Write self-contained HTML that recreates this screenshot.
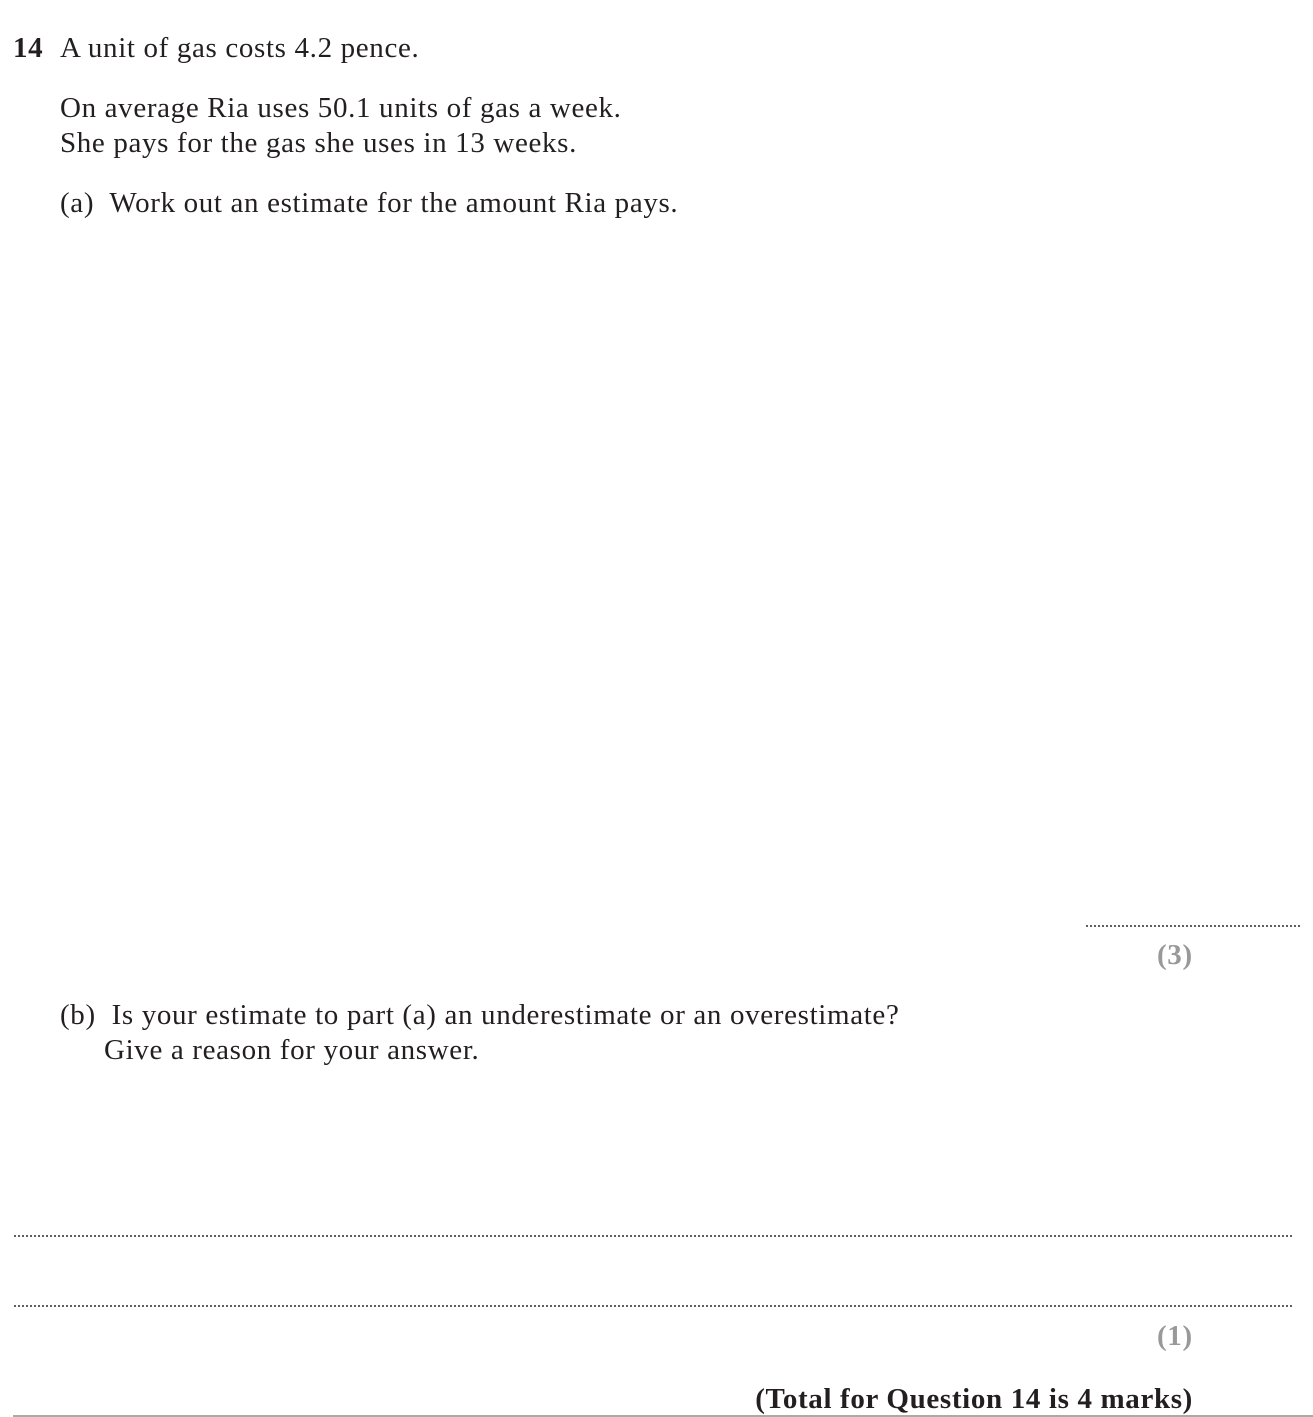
<!DOCTYPE html>
<html><head><meta charset="utf-8"><style>
body{margin:0;width:1313px;height:1417px;background:#fff;position:relative;overflow:hidden;font-family:"Liberation Serif",serif;color:#231f20}
.t{position:absolute;font-size:29px;line-height:28px;white-space:nowrap;letter-spacing:0.65px}
.d{position:absolute;height:2px;background:radial-gradient(circle,#333 0.8px,transparent 1.1px) 0 0/4px 2px repeat-x}
.g{color:#999;font-weight:bold}
</style></head><body>
<div class="t" style="left:13px;top:34px"><b>14</b></div>
<div class="t" style="left:60px;top:34px">A unit of gas costs 4.2 pence.</div>
<div class="t" style="left:60px;top:94px">On average Ria uses 50.1 units of gas a week.</div>
<div class="t" style="left:60px;top:129px">She pays for the gas she uses in 13 weeks.</div>
<div class="t" style="left:60px;top:189px">(a)&nbsp; Work out an estimate for the amount Ria pays.</div>
<div class="d" style="left:1085px;width:216px;top:925px"></div>
<div class="t g" style="left:1157px;top:941px">(3)</div>
<div class="t" style="left:60px;top:1001px">(b)&nbsp; Is your estimate to part (a) an underestimate or an overestimate?</div>
<div class="t" style="left:104px;top:1036px">Give a reason for your answer.</div>
<div class="d" style="left:13px;width:1281px;top:1235px"></div>
<div class="d" style="left:13px;width:1281px;top:1305px"></div>
<div class="t g" style="left:1157px;top:1322px">(1)</div>
<div class="t" style="right:120px;top:1385px"><b>(Total for Question 14 is 4 marks)</b></div>
<div style="position:absolute;left:13px;right:0;top:1415px;height:2px;background:#aaa"></div>
</body></html>
